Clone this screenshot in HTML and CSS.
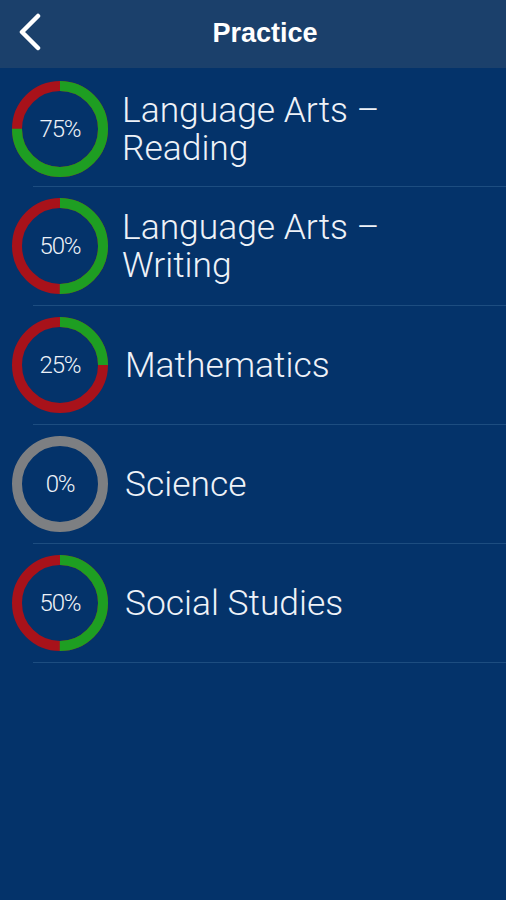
FILE: index.html
```html
<!DOCTYPE html>
<html lang="en">
<head>
  <meta charset="UTF-8" />
  <title>Practice</title>
  <meta name="viewport" content="width=device-width, initial-scale=1.0" />
  <link rel="stylesheet" href="styles.css">
</head>
<body>
  <div class="screen">
    <div class="nav-bar">
      <a href="#" class="back-btn">
        <svg width="26" height="40" viewBox="0 0 26 40">
          <polyline points="20,3 4,19 20,35" fill="none" stroke="#ffffff" stroke-width="4.5" stroke-linecap="round" stroke-linejoin="round" />
        </svg>
      </a>
      <h1 class="nav-title">Practice</h1>
    </div>

    <div class="subject-list">
      <div class="subject-row">
        <div class="ring">
          <svg width="96" height="96" viewBox="0 0 96 96">
            <circle cx="48" cy="48" r="43" class="ring-bad" />
            <circle cx="48" cy="48" r="43" class="ring-good" stroke-dasharray="202.6 270.2" />
          </svg>
          <span class="ring-label">75%</span>
        </div>
        <div class="subject-name two-line">Language Arts –<br>Reading</div>
      </div>
      <div class="divider"></div>

      <div class="subject-row">
        <div class="ring">
          <svg width="96" height="96" viewBox="0 0 96 96">
            <circle cx="48" cy="48" r="43" class="ring-bad" />
            <circle cx="48" cy="48" r="43" class="ring-good" stroke-dasharray="135.1 270.2" />
          </svg>
          <span class="ring-label">50%</span>
        </div>
        <div class="subject-name two-line">Language Arts –<br>Writing</div>
      </div>
      <div class="divider"></div>

      <div class="subject-row">
        <div class="ring">
          <svg width="96" height="96" viewBox="0 0 96 96">
            <circle cx="48" cy="48" r="43" class="ring-bad" />
            <circle cx="48" cy="48" r="43" class="ring-good" stroke-dasharray="67.5 270.2" />
          </svg>
          <span class="ring-label">25%</span>
        </div>
        <div class="subject-name">Mathematics</div>
      </div>
      <div class="divider"></div>

      <div class="subject-row">
        <div class="ring">
          <svg width="96" height="96" viewBox="0 0 96 96">
            <circle cx="48" cy="48" r="43" class="ring-empty" />
          </svg>
          <span class="ring-label">0%</span>
        </div>
        <div class="subject-name">Science</div>
      </div>
      <div class="divider"></div>

      <div class="subject-row">
        <div class="ring">
          <svg width="96" height="96" viewBox="0 0 96 96">
            <circle cx="48" cy="48" r="43" class="ring-bad" />
            <circle cx="48" cy="48" r="43" class="ring-good" stroke-dasharray="135.1 270.2" />
          </svg>
          <span class="ring-label">50%</span>
        </div>
        <div class="subject-name">Social Studies</div>
      </div>
      <div class="divider"></div>
    </div>
  </div>
</body>
</html>
```

FILE: styles.css
```css
body {
  margin: 0;
  font-family: Roboto, 'Liberation Sans', sans-serif;
  background: #04336a;
  color: #eef2f8;
}

.screen {
  width: 506px;
  min-height: 900px;
  background: #04336a;
}

.nav-bar {
  height: 68px;
  background: #1b406b;
  display: flex;
  align-items: center;
  padding: 0 0 2px 18px;
  box-sizing: border-box;
}

.back-btn {
  display: flex;
  width: 26px;
  height: 40px;
}

.nav-title {
  flex: 1;
  margin: 0;
  padding-right: 20px;
  text-align: center;
  font-family: 'Liberation Sans', Arial, sans-serif;
  font-size: 27px;
  font-weight: bold;
  color: #ffffff;
}

.subject-list {
  display: flex;
  flex-direction: column;
}

.subject-row {
  height: 118px;
  display: flex;
  align-items: center;
  padding-left: 12px;
  gap: 17px;
}

.subject-row:first-child {
  padding-top: 4px;
  height: 114px;
}

.divider {
  height: 1px;
  margin-left: 33px;
  background: #1d4d80;
}

.ring {
  position: relative;
  width: 96px;
  height: 96px;
  flex: none;
}

.ring svg {
  display: block;
  transform: rotate(-90deg);
}

.ring circle {
  fill: none;
  stroke-width: 10;
}

.ring-bad {
  stroke: #a8121a;
}

.ring-good {
  stroke: #1e9e22;
}

.ring-empty {
  stroke: #7d7f82;
}

.ring-label {
  position: absolute;
  inset: 0;
  display: flex;
  align-items: center;
  justify-content: center;
  font-size: 24px;
  font-weight: 300;
  letter-spacing: -1.2px;
  color: #eef2f8;
}

.subject-name {
  font-size: 35.4px;
  font-weight: 300;
  line-height: 38px;
}

.subject-name.two-line {
  margin-left: -3px;
}
```
